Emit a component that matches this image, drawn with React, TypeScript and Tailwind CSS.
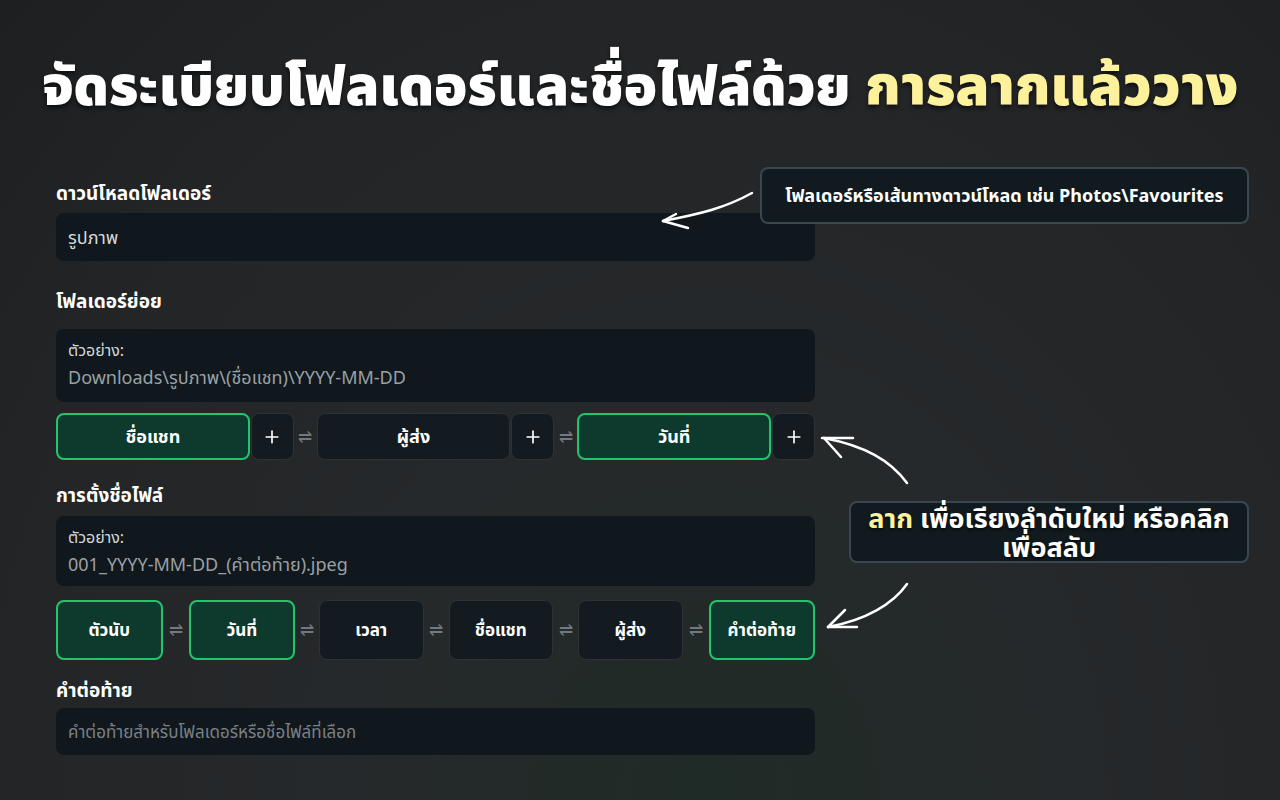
import { Plus } from "lucide-react";

const FONT = { fontFamily: '"Noto Sans", "Noto Sans Thai", "Liberation Sans", sans-serif' };

function Swap({ className = "" }: { className?: string }) {
  return (
    <span className={`flex items-center justify-center text-[17px] text-[#737980] ${className}`}>⇌</span>
  );
}

function Chip({ label, active, small }: { label: string; active?: boolean; small?: boolean }) {
  return (
    <div
      className={`flex-1 flex items-center justify-center rounded-lg font-bold text-white ${
        small ? "h-[60px] text-[17px]" : "h-[47px] text-[18px]"
      } ${
        active
          ? "bg-[#0d3a2c] border-2 border-[#22c56b]"
          : "bg-[#141b20] border border-[#2c3236]"
      }`}
    >
      {label}
    </div>
  );
}

function PlusBtn() {
  return (
    <div className="w-[43px] h-[47px] shrink-0 flex items-center justify-center rounded-lg bg-[#141b20] border border-[#2c3236] text-white">
      <Plus className="w-[20px] h-[20px]" strokeWidth={2} />
    </div>
  );
}

function Label({ children, className = "" }: { children: React.ReactNode; className?: string }) {
  return <p className={`text-[19px] font-bold text-white leading-6 ${className}`}>{children}</p>;
}

function ExampleBox({ value, className = "" }: { value: string; className?: string }) {
  return (
    <div className={`rounded-lg bg-[#10181d] px-3 pt-[10px] ${className}`}>
      <p className="text-[16px] leading-[22px] text-[#d4d7da]">ตัวอย่าง:</p>
      <p className="text-[18px] leading-[26px] text-[#9aa0a6] mt-[3px]">{value}</p>
    </div>
  );
}

export default function App() {
  return (
    <div
      style={FONT}
      className="relative w-[1280px] h-[800px] overflow-hidden bg-[radial-gradient(ellipse_at_55%_100%,#1f2b26_0%,#26292b_35%,#232527_70%,#1d1f21_100%)]"
    >
      {/* หัวเรื่อง */}
      <h1 className="pt-[52px] text-center text-[55px] leading-[64px] font-black text-white [text-shadow:0_3px_4px_rgba(0,0,0,0.6)]">
        จัดระเบียบโฟลเดอร์และชื่อไฟล์ด้วย <span className="text-[#fdf29b]">การลากแล้ววาง</span>
      </h1>

      {/* ฟอร์ม */}
      <div className="ml-[56px] w-[759px] mt-[65px]">
        <Label>ดาวน์โหลดโฟลเดอร์</Label>
        <div className="mt-[8px] h-[48px] rounded-lg bg-[#10181d] px-3 flex items-center text-[18px] text-[#d4d7da]">
          รูปภาพ
        </div>

        <Label className="mt-[28px]">โฟลเดอร์ย่อย</Label>
        <ExampleBox className="mt-[16px] h-[73px]" value="Downloads\รูปภาพ\(ชื่อแชท)\YYYY-MM-DD" />

        <div className="mt-[11px] flex items-center">
          <div className="flex-1 flex gap-[1px]">
            <Chip label="ชื่อแชท" active />
            <PlusBtn />
          </div>
          <Swap className="w-[23px]" />
          <div className="flex-1 flex gap-[1px]">
            <Chip label="ผู้ส่ง" />
            <PlusBtn />
          </div>
          <Swap className="w-[23px]" />
          <div className="flex-1 flex gap-[1px]">
            <Chip label="วันที่" active />
            <PlusBtn />
          </div>
        </div>

        <Label className="mt-[23px]">การตั้งชื่อไฟล์</Label>
        <ExampleBox className="mt-[9px] h-[70px]" value="001_YYYY-MM-DD_(คำต่อท้าย).jpeg" />

        <div className="mt-[14px] flex items-center">
          <Chip small label="ตัวนับ" active />
          <Swap className="w-[26px]" />
          <Chip small label="วันที่" active />
          <Swap className="w-[24px]" />
          <Chip small label="เวลา" />
          <Swap className="w-[25px]" />
          <Chip small label="ชื่อแชท" />
          <Swap className="w-[25px]" />
          <Chip small label="ผู้ส่ง" />
          <Swap className="w-[26px]" />
          <Chip small label="คำต่อท้าย" active />
        </div>

        <Label className="mt-[18px]">คำต่อท้าย</Label>
        <div className="mt-[6px] h-[47px] rounded-lg bg-[#10181d] px-3 flex items-center text-[17px] text-[#7b8086]">
          คำต่อท้ายสำหรับโฟลเดอร์หรือชื่อไฟล์ที่เลือก
        </div>
      </div>

      {/* คำอธิบาย */}
      <div className="absolute left-[760px] top-[167px] w-[489px] h-[57px] rounded-lg bg-[#111a1f] border-2 border-[#3a4650] flex items-center justify-center text-[18px] font-bold text-white">
        โฟลเดอร์หรือเส้นทางดาวน์โหลด เช่น Photos\Favourites
      </div>
      <div className="absolute left-[849px] top-[501px] w-[400px] h-[62px] rounded-lg bg-[#111a1f] border-2 border-[#3a4650] flex flex-col items-center justify-center text-center text-[27px] leading-[29px] font-bold text-white [text-shadow:0_2px_3px_rgba(0,0,0,0.6)]">
        <p>
          <span className="text-[#fdf29b]">ลาก</span> เพื่อเรียงลำดับใหม่ หรือคลิก
        </p>
        <p>เพื่อสลับ</p>
      </div>

      {/* ลูกศร */}
      <svg className="absolute left-0 top-0 pointer-events-none" width="1280" height="800" fill="none" stroke="white" strokeWidth="2.5" strokeLinecap="round" strokeLinejoin="round">
        <path d="M752 193 C725 208 700 214 663 221" />
        <path d="M663 221 L688 228" />
        <path d="M663 221 L676 214" />
        <path d="M907 483 C890 460 865 446 824 438" />
        <path d="M822 438 L853 438" />
        <path d="M824 438 L841 457" />
        <path d="M907 584 C893 604 866 620 828 627" />
        <path d="M828 627 L857 627" />
        <path d="M828 627 L845 610" />
      </svg>
    </div>
  );
}
